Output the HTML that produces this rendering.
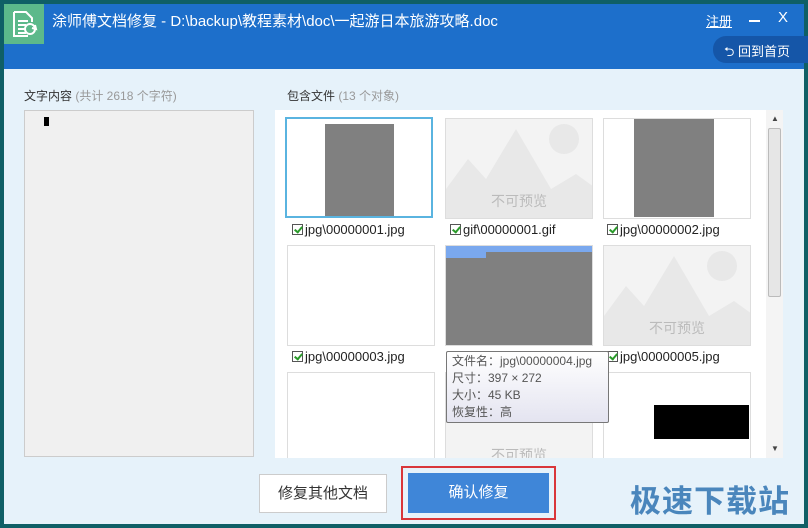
<!DOCTYPE html>
<html><head><meta charset="utf-8"><style>
*{margin:0;padding:0;box-sizing:border-box}
body{width:808px;height:528px;background:#0f5f66;position:relative;overflow:hidden;font-family:"Liberation Sans","Noto Sans CJK SC",sans-serif}
.a{position:absolute}
.win{left:4px;top:4px;width:800px;height:520px;background:#e6f2fa}
.title{left:4px;top:4px;width:800px;height:65px;background:#1d6fcb}
.cell{position:absolute;width:148px;height:101px;background:#fff;border:1px solid #ddd;overflow:hidden}
.lbl{position:absolute;font-size:13px;color:#222;white-space:nowrap}
.cb{display:inline-block;width:11px;height:11px;border:1px solid #555;background:#fff;vertical-align:-1px;margin-right:2px;position:relative}
.cb:after{content:"";position:absolute;left:3px;top:0px;width:3px;height:6px;border:solid #2a9a2a;border-width:0 2px 2px 0;transform:rotate(40deg)}
.np{background:#f3f3f3}
.np .t{position:absolute;left:0;width:100%;text-align:center;top:72px;font-size:14px;color:#bbb}
</style></head><body>
<div class="a win"></div>
<div class="a title"></div>
<div class="a" style="left:4px;top:4px;width:40px;height:40px;background:#5cb98b"></div>
<svg class="a" style="left:8px;top:8px" width="32" height="32" viewBox="0 0 32 32" fill="none" stroke="#fff" stroke-width="2"><path d="M6 4h12l6 6v4M6 4v24h14"/><path d="M10 13h10M10 17h8M10 21h8M10 25h8"/><circle cx="22" cy="21" r="5"/><path d="M27 17l1 4-4-1"/></svg>
<div class="a" style="left:52px;top:10px;font-size:15px;color:#fff;white-space:nowrap">涂师傅文档修复 - D:\backup\教程素材\doc\一起游日本旅游攻略.doc</div>
<div class="a" style="left:706px;top:11px;font-size:13px;color:#fff;text-decoration:underline">注册</div>
<div class="a" style="left:749px;top:20px;width:11px;height:2px;background:#fff"></div>
<div class="a" style="left:778px;top:9px;font-size:15px;color:#fff">X</div>
<div class="a" style="left:713px;top:36px;width:95px;height:27px;background:#1556a8;border-radius:13px 0 0 13px"></div>
<div class="a" style="left:724px;top:41px;font-size:13px;color:#fff;white-space:nowrap">⮌ 回到首页</div>
<div class="a" style="left:24px;top:87px;font-size:12px;color:#333;white-space:nowrap">文字内容 <span style="color:#999">(共计 2618 个字符)</span></div>
<div class="a" style="left:287px;top:87px;font-size:12px;color:#333;white-space:nowrap">包含文件 <span style="color:#999">(13 个对象)</span></div>
<div class="a" style="left:24px;top:110px;width:230px;height:347px;background:#f0f0f0;border:1px solid #ccc"></div>
<div class="a" style="left:44px;top:117px;width:5px;height:9px;background:#000"></div>
<div class="a" style="left:275px;top:110px;width:491px;height:348px;background:#fff;overflow:hidden">
 <div class="cell" style="left:10px;top:7px;border:2px solid #5ab4e0"><div class="a" style="left:38px;top:5px;width:69px;height:96px;background:#808080"></div></div>
 <div class="cell np" style="left:170px;top:8px"><svg class="a" width="148" height="101"><circle cx="118" cy="20" r="15" fill="#e8e8e8"/><path d="M0 70L22 40 40 60 70 10 105 70 130 55 148 68V101H0Z" fill="#e8e8e8"/></svg><div class="t">不可预览</div></div>
 <div class="cell" style="left:328px;top:8px"><div class="a" style="left:30px;top:0;width:80px;height:98px;background:#808080"></div></div>
 <div class="lbl" style="left:17px;top:112px"><span class="cb"></span>jpg\00000001.jpg</div>
 <div class="lbl" style="left:175px;top:112px"><span class="cb"></span>gif\00000001.gif</div>
 <div class="lbl" style="left:332px;top:112px"><span class="cb"></span>jpg\00000002.jpg</div>
 <div class="cell" style="left:12px;top:135px"></div>
 <div class="cell" style="left:170px;top:135px"><div class="a" style="left:0;top:0;width:148px;height:101px;background:#808080"></div><div class="a" style="left:0;top:0;width:148px;height:6px;background:#7aa8ee"></div><div class="a" style="left:0;top:0;width:40px;height:12px;background:#7aa8ee"></div></div>
 <div class="cell np" style="left:328px;top:135px"><svg class="a" width="148" height="101"><circle cx="118" cy="20" r="15" fill="#e8e8e8"/><path d="M0 70L22 40 40 60 70 10 105 70 130 55 148 68V101H0Z" fill="#e8e8e8"/></svg><div class="t">不可预览</div></div>
 <div class="lbl" style="left:17px;top:239px"><span class="cb"></span>jpg\00000003.jpg</div>
 <div class="lbl" style="left:332px;top:239px"><span class="cb"></span>jpg\00000005.jpg</div>
 <div class="cell" style="left:12px;top:262px"></div>
 <div class="cell np" style="left:170px;top:262px"><div class="t" style="top:72px">不可预览</div></div>
 <div class="cell" style="left:328px;top:262px"><div class="a" style="left:50px;top:32px;width:95px;height:34px;background:#000"></div></div>
</div>
<div class="a" style="left:446px;top:351px;width:163px;height:72px;background:linear-gradient(#fff,#e4e4f0);border:1px solid #777;border-radius:2px;font-size:12px;color:#555;line-height:17px;padding:1px 5px;white-space:nowrap">文件名：jpg\00000004.jpg<br>尺寸：397 × 272<br>大小：45 KB<br>恢复性：高</div>
<div class="a" style="left:766px;top:110px;width:17px;height:348px;background:#f4f4f4"></div>
<div class="a" style="left:768px;top:128px;width:13px;height:169px;background:#e6e6e6;border:1px solid #bbb;border-radius:2px"></div>
<div class="a" style="left:771px;top:114px;font-size:8px;color:#444">▲</div>
<div class="a" style="left:771px;top:444px;font-size:8px;color:#444">▼</div>
<div class="a" style="left:259px;top:474px;width:128px;height:39px;background:#fff;border:1px solid #ccc;font-size:15px;color:#333;text-align:center;line-height:38px">修复其他文档</div>
<div class="a" style="left:401px;top:466px;width:155px;height:54px;border:2px solid #d9363a"></div>
<div class="a" style="left:408px;top:473px;width:141px;height:40px;background:#3f86d8;font-size:15px;color:#fff;text-align:center;line-height:40px">确认修复</div>
<div class="a" style="left:630px;top:476px;font-size:31px;font-weight:bold;color:#4a86bc;white-space:nowrap;letter-spacing:1px">极速下载站</div>
</body></html>
